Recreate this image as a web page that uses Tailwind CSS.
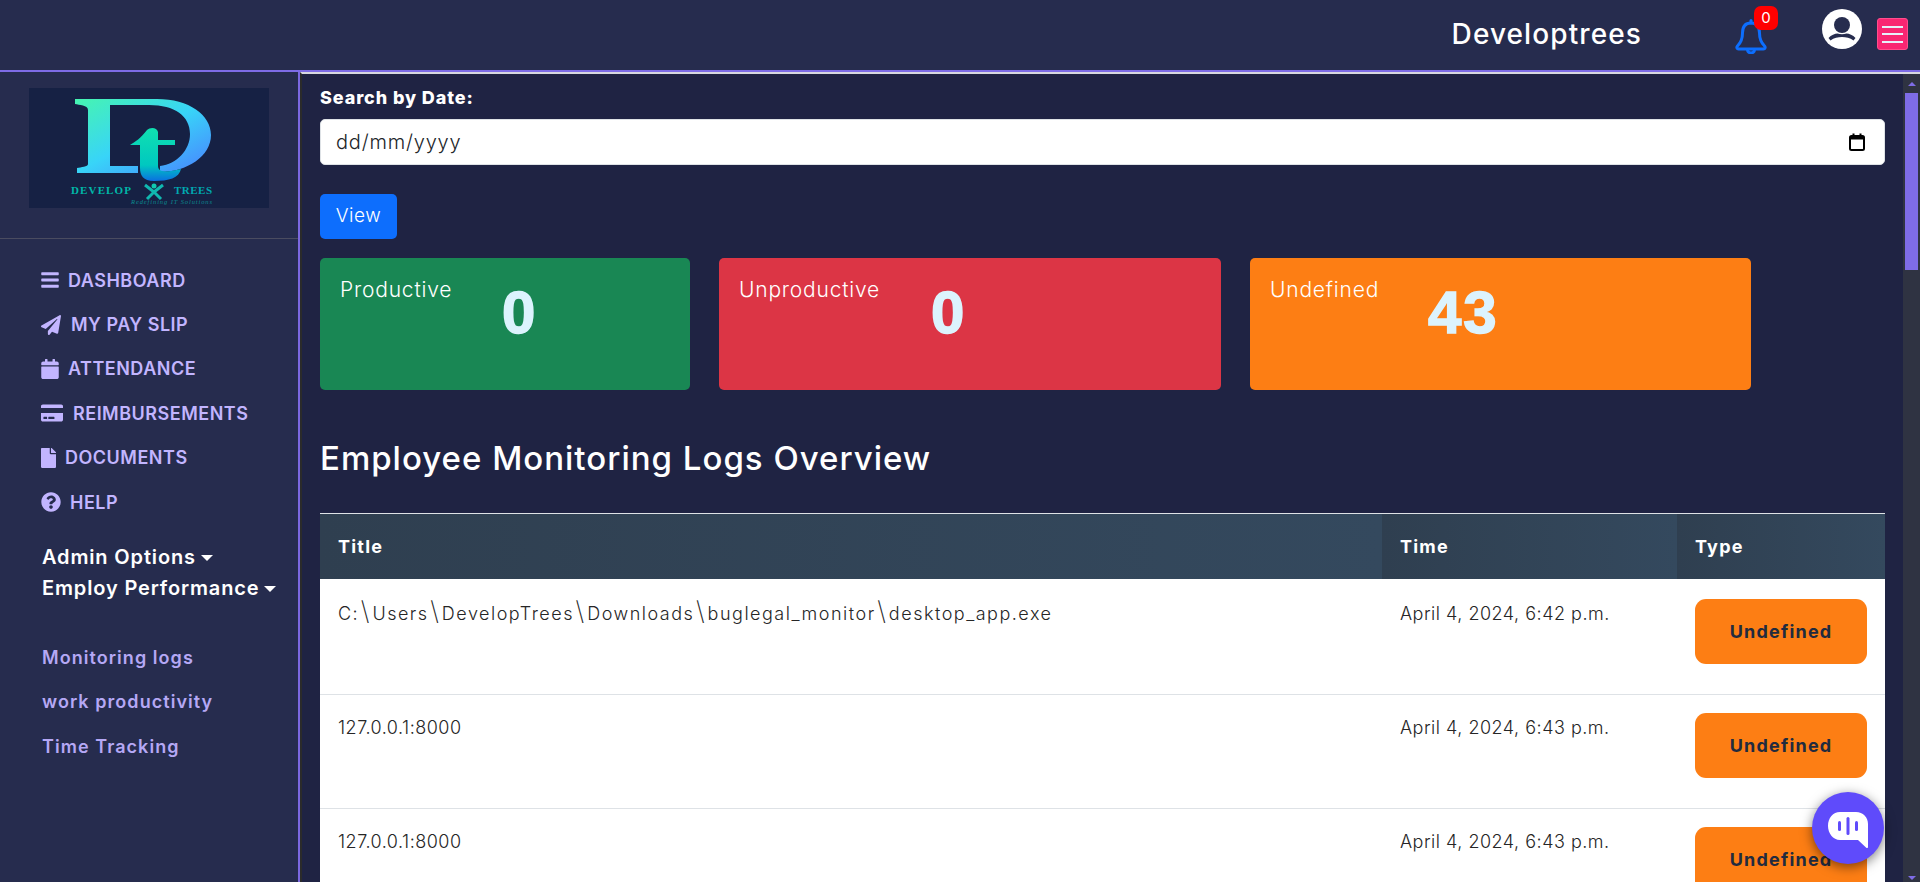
<!DOCTYPE html>
<html lang="en">
<head>
	<meta charset="UTF-8">
	<title>Developtrees</title>
	<script src="https://cdn.jsdelivr.net/npm/@tailwindcss/browser@4"></script>
</head>
<body class="h-[882px] overflow-hidden bg-[#1f2343] font-['Inter',sans-serif]">

	<!-- top bar -->
	<header class="h-[72px] bg-[#262c4e] border-b-2 border-[#7e6ce6] flex items-start justify-end">
		<span class="text-[28px] font-medium text-white mt-[13px] tracking-[1.1px]">Developtrees</span>
		<div class="relative ml-[93px] mt-[18px] w-[32px] h-[36px]">
			<svg viewBox="0 0 32 36" class="w-[32px] h-[36px]" fill="none" stroke="#0d6efd" stroke-width="3" stroke-linejoin="round" stroke-linecap="round">
				<path d="M16 5C9.5 5 7.5 10 7.5 15C7.5 21 6.5 24 2.5 28C1.2 29.5 2 31 3.5 31H28.5C30 31 30.8 29.5 29.5 28C25.5 24 24.5 21 24.5 15C24.5 10 22.5 5 16 5Z"/>
				<path d="M16 5V2.5"/>
				<path d="M12.5 31.5C12.5 36 19.5 36 19.5 31.5"/>
			</svg>
			<span class="absolute left-[19px] top-[-12px] w-[24px] h-[24px] rounded-[7px] bg-[#ff0000] text-white text-[15px] flex items-center justify-center">0</span>
		</div>
		<svg viewBox="0 0 40 40" class="w-[40px] h-[40px] ml-[55px] mt-[9px]">
			<circle cx="20" cy="20" r="20" fill="#fff"/>
			<circle cx="20" cy="16" r="8" fill="#262c4e"/>
			<path d="M6.5 29C9 26 13 24.5 15.5 24.5C18 25.5 22 25.5 24.5 24.5C27 24.5 31 26 33.5 29L31.5 31.5C28 28.5 24 28 20 28C16 28 12 28.5 8.5 31.5Z" fill="#262c4e"/>
		</svg>
		<div class="ml-[15px] mr-[12px] mt-[18px] w-[31px] h-[32px] bg-[#f92672] border border-[#ff4d8d] rounded-[3px] flex flex-col items-center justify-center gap-[5.5px]">
			<span class="w-[21px] h-[2px] bg-[#e6f0fa]"></span>
			<span class="w-[21px] h-[2px] bg-[#e6f0fa]"></span>
			<span class="w-[21px] h-[2px] bg-[#e6f0fa]"></span>
		</div>
	</header>

	<div class="flex h-[810px]">
		<!-- sidebar -->
		<aside class="w-[300px] shrink-0 bg-[#262c4e] border-r-2 border-[#7b68e0]">
			<div class="pt-[16px] pb-[30px] pl-[29px]">
				<svg viewBox="0 0 240 120" class="w-[240px] h-[120px] bg-[#162144]">
					<defs>
						<linearGradient id="dGrad" x1="0" y1="0" x2="1" y2="1">
							<stop offset="0" stop-color="#46f5b0"/>
							<stop offset="0.5" stop-color="#38d4f8"/>
							<stop offset="1" stop-color="#4a80ff"/>
						</linearGradient>
						<linearGradient id="tGrad" x1="0" y1="0" x2="0" y2="1">
							<stop offset="0" stop-color="#10e0b0"/>
							<stop offset="0.7" stop-color="#00c8c0"/>
							<stop offset="1" stop-color="#0a70e0"/>
						</linearGradient>
					</defs>
					<path fill="url(#dGrad)" d="M46 11H128C160 11 182 27 182 47C182 68 158 84 131 84L131 78C148 76 161 62 161 46C161 28 146 17 120 17H81V78H109V85H48V80C52 79 59 79 59 76V22C59 17 50 17 46 16Z"/>
					<path fill="#162144" d="M109 78H131V85H109Z"/>
					<path fill="url(#tGrad)" d="M111 57H101C106 54 112 50 118 42C121 39 128 39 129 44V52H146V57H129V78C129 84 136 85 152 81C150 90 140 93 125 93C114 93 111 87 111 80Z"/>
					<text x="42" y="106" font-family="Liberation Serif" font-weight="700" font-size="11" textLength="60" fill="#00b8a8">DEVELOP</text>
					<text x="145" y="106" font-family="Liberation Serif" font-weight="700" font-size="11" textLength="38" fill="#00a8b0">TREES</text>
					<circle cx="125" cy="98" r="2.5" fill="#10c8b0"/>
					<path d="M116 97L125 104L134 97M118 111L125 104L132 111" fill="none" stroke="#10b8b0" stroke-width="3"/>
					<text x="102" y="116" font-family="Liberation Serif" font-style="italic" font-size="6.5" textLength="81" fill="#0a8a90">Redefining IT Solutions</text>
				</svg>
			</div>
			<div class="h-px bg-[#4a4c60]"></div>

			<nav class="pt-[19px] pl-[41px] text-[#c2b5ff] text-[18px] font-semibold tracking-[0.5px]">
				<a class="h-[44.4px] flex items-center gap-[9px]">
					<svg viewBox="0 0 448 512" fill="currentColor" class="w-[18px] h-[20px]"><path d="M16 132h416c8.837 0 16-7.163 16-16V76c0-8.837-7.163-16-16-16H16C7.163 60 0 67.163 0 76v40c0 8.837 7.163 16 16 16zm0 160h416c8.837 0 16-7.163 16-16v-40c0-8.837-7.163-16-16-16H16c-8.837 0-16 7.163-16 16v40c0 8.837 7.163 16 16 16zm0 160h416c8.837 0 16-7.163 16-16v-40c0-8.837-7.163-16-16-16H16c-8.837 0-16 7.163-16 16v40c0 8.837 7.163 16 16 16z"/></svg>
					DASHBOARD
				</a>
				<a class="h-[44.4px] flex items-center gap-[10px]">
					<svg viewBox="0 0 512 512" fill="currentColor" class="w-[20px] h-[20px]"><path d="M476 3.2L12.5 270.6c-18.1 10.4-15.8 35.6 2.2 43.2L121 358.4l287.3-253.2c5.5-4.9 13.3 2.6 8.6 8.3L176 407v80.5c0 23.6 28.5 32.9 42.5 15.8L282 426l124.6 52.2c14.2 6 30.4-2.9 33-18.2l72-432C515 7.8 493.3-6.8 476 3.2z"/></svg>
					MY PAY SLIP
				</a>
				<a class="h-[44.4px] flex items-center gap-[9px]">
					<svg viewBox="0 0 448 512" fill="currentColor" class="w-[18px] h-[20px]"><path d="M12 192h424c6.6 0 12 5.4 12 12v260c0 26.5-21.5 48-48 48H48c-26.5 0-48-21.5-48-48V204c0-6.6 5.4-12 12-12zm436-44v-36c0-26.5-21.5-48-48-48h-48V12c0-6.6-5.4-12-12-12h-40c-6.6 0-12 5.4-12 12v52H160V12c0-6.6-5.4-12-12-12h-40c-6.6 0-12 5.4-12 12v52H48C21.5 64 0 85.5 0 112v36c0 6.6 5.4 12 12 12h424c6.6 0 12-5.4 12-12z"/></svg>
					ATTENDANCE
				</a>
				<a class="h-[44.4px] flex items-center gap-[10px]">
					<svg viewBox="0 0 576 512" fill="currentColor" class="w-[22px] h-[20px]"><path d="M0 432c0 26.5 21.5 48 48 48h480c26.5 0 48-21.5 48-48V256H0v176zm192-68c0-6.6 5.4-12 12-12h136c6.6 0 12 5.4 12 12v40c0 6.6-5.4 12-12 12H204c-6.6 0-12-5.4-12-12v-40zm-128 0c0-6.6 5.4-12 12-12h72c6.6 0 12 5.4 12 12v40c0 6.6-5.4 12-12 12H76c-6.6 0-12-5.4-12-12v-40zM576 80v48H0V80c0-26.5 21.5-48 48-48h480c26.5 0 48 21.5 48 48z"/></svg>
					REIMBURSEMENTS
				</a>
				<a class="h-[44.4px] flex items-center gap-[9px]">
					<svg viewBox="0 0 384 512" fill="currentColor" class="w-[15px] h-[20px]"><path d="M224 136V0H24C10.7 0 0 10.7 0 24v464c0 13.3 10.7 24 24 24h336c13.3 0 24-10.7 24-24V160H248c-13.2 0-24-10.8-24-24zm160-14.1v6.1H256V0h6.1c6.4 0 12.5 2.5 17 7l97.9 98c4.5 4.5 7 10.6 7 16.9z"/></svg>
					DOCUMENTS
				</a>
				<a class="h-[44.4px] flex items-center gap-[9px]">
					<svg viewBox="0 0 512 512" fill="currentColor" class="w-[20px] h-[20px]"><path d="M504 256c0 136.997-111.043 248-248 248S8 392.997 8 256C8 119.083 119.043 8 256 8s248 111.083 248 248zM262.655 90c-54.497 0-89.255 22.957-116.549 63.758-3.536 5.286-2.353 12.415 2.715 16.258l34.699 26.31c5.205 3.947 12.621 3.008 16.665-2.122 17.864-22.658 30.113-35.797 57.303-35.797 20.429 0 45.698 13.148 45.698 32.958 0 14.976-12.363 22.667-32.534 33.976C247.128 238.528 216 254.941 216 296v4c0 6.627 5.373 12 12 12h56c6.627 0 12-5.373 12-12v-1.333c0-28.462 83.186-29.647 83.186-106.667 0-58.002-60.165-102-116.531-102zM256 338c-25.365 0-46 20.635-46 46 0 25.364 20.635 46 46 46s46-20.636 46-46c0-25.365-20.635-46-46-46z"/></svg>
					HELP
				</a>
			</nav>

			<div class="mt-[18px] pl-[42px] text-white text-[20px] font-semibold leading-[31px] tracking-[0.85px]">
				<div class="flex items-center gap-[5px]">Admin Options <span class="w-0 h-0 border-x-[6px] border-x-transparent border-t-[6px] border-t-white"></span></div>
				<div class="flex items-center gap-[5px]">Employ Performance <span class="w-0 h-0 border-x-[6px] border-x-transparent border-t-[6px] border-t-white"></span></div>
			</div>

			<div class="mt-[31px] pl-[42px] text-[#b5a8f5] text-[18px] font-semibold tracking-[1.05px]">
				<a class="h-[44.4px] flex items-center">Monitoring logs</a>
				<a class="h-[44.4px] flex items-center">work productivity</a>
				<a class="h-[44.4px] flex items-center">Time Tracking</a>
			</div>
		</aside>

		<!-- main content -->
		<main class="flex-1 min-w-0 flex border-t-2 border-t-[#d8d8e0] border-l-2 border-l-[#2b2b2b]">
			<div class="w-[1601px] shrink-0 pl-[18px] pr-[18px] overflow-hidden">
				<label class="block pt-[10px] text-[18px] leading-[27px] font-extrabold text-white tracking-[0.9px]">Search by Date:</label>
				<div class="mt-[8px] h-[46px] bg-white rounded-[5px] border border-[#dee2e6] pl-[15px] pr-[19px] flex items-center justify-between text-[20px] tracking-[0.8px] font-light text-[#212529]">
					<span>dd/mm/yyyy</span>
					<svg viewBox="0 0 16 18" class="w-[16px] h-[18px]" fill="none" stroke="#000">
						<rect x="1" y="3" width="14" height="14" rx="1.5" stroke-width="2"/>
						<path d="M1 5H15" stroke-width="3"/>
						<path d="M4.5 0.5V3M11.5 0.5V3" stroke-width="2"/>
					</svg>
				</div>
				<button class="block mt-[29px] w-[77px] h-[45px] bg-[#0d6efd] rounded-[5px] text-white text-[19px] tracking-[0.5px] font-light">View</button>

				<div class="mt-[19px] flex">
					<div class="w-[370px] h-[132px] bg-[#198754] rounded-[5px] pl-[20px] flex items-start text-white">
						<span class="w-[112px] mt-[17px] text-[21px] tracking-[0.8px] font-light leading-[30px]">Productive</span>
						<span class="ml-[50px] mt-[20px] font-['Liberation_Sans'] font-bold text-[60px] leading-[70px] text-[#dcf3fd] [-webkit-text-stroke:1.5px_#dcf3fd]">0</span>
					</div>
					<div class="ml-[29px] w-[502px] h-[132px] bg-[#dc3545] rounded-[5px] pl-[20px] flex items-start text-white">
						<span class="w-[142px] mt-[17px] text-[21px] tracking-[0.8px] font-light leading-[30px]">Unproductive</span>
						<span class="ml-[50px] mt-[20px] font-['Liberation_Sans'] font-bold text-[60px] leading-[70px] text-[#dcf3fd] [-webkit-text-stroke:1.5px_#dcf3fd]">0</span>
					</div>
					<div class="ml-[29px] w-[501px] h-[132px] bg-[#fd7e14] rounded-[5px] pl-[20px] flex items-start text-white">
						<span class="w-[108px] mt-[17px] text-[21px] tracking-[0.8px] font-light leading-[30px]">Undefined</span>
						<span class="ml-[50px] mt-[20px] font-['Liberation_Sans'] font-bold text-[60px] leading-[70px] tracking-[2px] text-[#dcf3fd] [-webkit-text-stroke:1.5px_#dcf3fd]">43</span>
					</div>
				</div>

				<h2 class="mt-[44px] text-[33px] tracking-[1px] leading-[48px] font-medium text-white">Employee Monitoring Logs Overview</h2>

				<div class="mt-[31px] w-[1565px] border-t border-[#dee2e6]">
					<div class="grid grid-cols-[1062px_295px_208px] h-[65px] text-white text-[18px] font-bold tracking-[1.2px]">
						<div class="bg-linear-to-r from-[#2f3f50] to-[#34495e] pl-[18px] flex items-center">Title</div>
						<div class="bg-linear-to-r from-[#2f3f50] to-[#34495e] pl-[18px] flex items-center">Time</div>
						<div class="bg-linear-to-r from-[#2f3f50] to-[#34495e] pl-[18px] flex items-center">Type</div>
					</div>
					<div class="bg-white text-[#262626] text-[18px] font-light tracking-[0.5px]">
						<div class="grid grid-cols-[1062px_295px_208px] h-[116px] border-b border-[#dee2e6] pt-[20px]">
							<div class="pl-[18px] leading-[29px] tracking-[1.5px]">C:<span class="text-[26px] font-extralight leading-[0] mx-[1.5px]">\</span>Users<span class="text-[26px] font-extralight leading-[0] mx-[1.5px]">\</span>DevelopTrees<span class="text-[26px] font-extralight leading-[0] mx-[1.5px]">\</span>Downloads<span class="text-[26px] font-extralight leading-[0] mx-[1.5px]">\</span>buglegal_monitor<span class="text-[26px] font-extralight leading-[0] mx-[1.5px]">\</span>desktop_app.exe</div>
							<div class="pl-[18px] leading-[29px]">April 4, 2024, 6:42 p.m.</div>
							<div class="pl-[18px]"><span class="flex w-[172px] h-[65px] items-center justify-center bg-[#fd7e14] rounded-[11px] text-[#212b3f] font-bold tracking-[1.2px]">Undefined</span></div>
						</div>
						<div class="grid grid-cols-[1062px_295px_208px] h-[114px] border-b border-[#dee2e6] pt-[18px]">
							<div class="pl-[18px] leading-[29px]">127.0.0.1:8000</div>
							<div class="pl-[18px] leading-[29px]">April 4, 2024, 6:43 p.m.</div>
							<div class="pl-[18px]"><span class="flex w-[172px] h-[65px] items-center justify-center bg-[#fd7e14] rounded-[11px] text-[#212b3f] font-bold tracking-[1.2px]">Undefined</span></div>
						</div>
						<div class="grid grid-cols-[1062px_295px_208px] h-[114px] border-b border-[#dee2e6] pt-[18px]">
							<div class="pl-[18px] leading-[29px]">127.0.0.1:8000</div>
							<div class="pl-[18px] leading-[29px]">April 4, 2024, 6:43 p.m.</div>
							<div class="pl-[18px]"><span class="flex w-[172px] h-[65px] items-center justify-center bg-[#fd7e14] rounded-[11px] text-[#212b3f] font-bold tracking-[1.2px]">Undefined</span></div>
						</div>
					</div>
				</div>
			</div>

			<!-- scrollbar -->
			<div class="flex-1 bg-[#2f3342] flex flex-col items-center">
				<span class="mt-[8px] w-0 h-0 border-x-[4px] border-x-transparent border-b-[4px] border-b-[#7e6ce6]"></span>
				<span class="mt-[7px] w-[13px] h-[177px] bg-[#7e6ce6]"></span>
				<span class="mt-auto mb-[2px] w-0 h-0 border-x-[4px] border-x-transparent border-t-[4px] border-t-[#7e6ce6]"></span>
			</div>
		</main>
	</div>

	<!-- chat bubble -->
	<div class="fixed left-[1812px] top-[792px] w-[72px] h-[72px] rounded-full bg-[#5f4bfb] shadow-[0_3px_12px_rgba(0,0,0,0.5)] flex items-center justify-center">
		<svg viewBox="0 0 42 38" class="w-[42px] h-[38px] mt-[4px]">
			<path fill="#fff" d="M13 1H29C36 1 41 6 41 13V36C41 37 40 37.5 39 36.5L31 29H13C6 29 1 22 1 15C1 7 6 1 13 1Z"/>
			<rect x="11" y="10" width="3" height="10" rx="1.5" fill="#5f4bfb"/>
			<rect x="19.5" y="6" width="3" height="18" rx="1.5" fill="#5f4bfb"/>
			<rect x="28" y="10" width="3" height="10" rx="1.5" fill="#5f4bfb"/>
		</svg>
	</div>
</body>
</html>
